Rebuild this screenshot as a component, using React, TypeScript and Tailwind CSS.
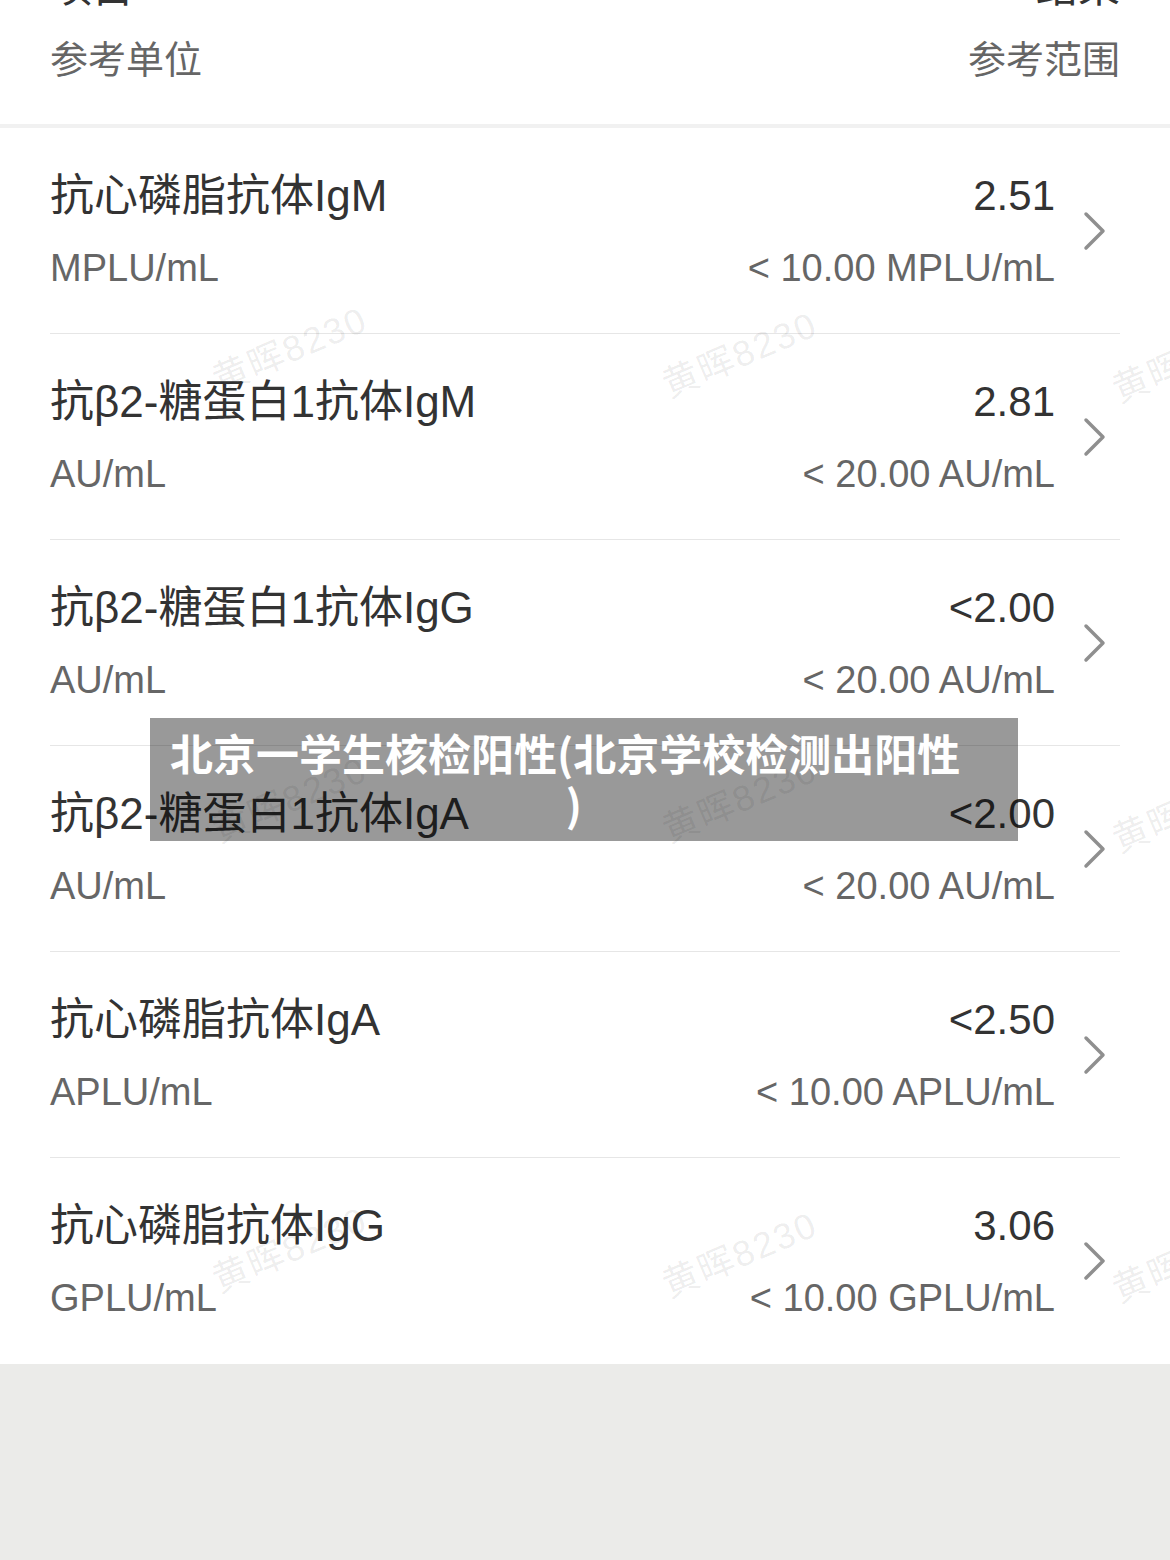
import React from 'react';

type Item = {
    name: string;
    unit: string;
    value: string;
    range: string;
};

const ITEMS: Item[] = [
    { name: '抗心磷脂抗体IgM', unit: 'MPLU/mL', value: '2.51', range: '< 10.00 MPLU/mL' },
    { name: '抗β2-糖蛋白1抗体IgM', unit: 'AU/mL', value: '2.81', range: '< 20.00 AU/mL' },
    { name: '抗β2-糖蛋白1抗体IgG', unit: 'AU/mL', value: '<2.00', range: '< 20.00 AU/mL' },
    { name: '抗β2-糖蛋白1抗体IgA', unit: 'AU/mL', value: '<2.00', range: '< 20.00 AU/mL' },
    { name: '抗心磷脂抗体IgA', unit: 'APLU/mL', value: '<2.50', range: '< 10.00 APLU/mL' },
    { name: '抗心磷脂抗体IgG', unit: 'GPLU/mL', value: '3.06', range: '< 10.00 GPLU/mL' },
];

// watermark centres
const MARKS = [
    [290, 350], [740, 355], [1190, 360],
    [290, 800], [740, 800], [1190, 810],
    [290, 1250], [740, 1255], [1190, 1260],
];

const FONT = "font-['Liberation_Sans','Noto_Sans_CJK_SC',sans-serif]";

const Chevron: React.FC = () => (
    <svg width="24" height="40" viewBox="0 0 24 40" fill="none">
        <path d="M3 3 L20 20 L3 37" stroke="#8f8f8f" strokeWidth="3.5" strokeLinecap="round" strokeLinejoin="round" />
    </svg>
);

const App: React.FC = () => {
    return (
        <div className={`relative h-[1560px] overflow-hidden bg-[#ebebe9] ${FONT}`}>
            <div className="bg-white -mt-[79px]">
                {/* Header */}
                <div className="mx-[50px] h-[203px] flex flex-col justify-center gap-[24px]">
                    <div className="flex justify-between text-[42px] leading-[50px] text-[#333]">
                        <span>项目</span>
                        <span>结果</span>
                    </div>
                    <div className="flex justify-between text-[38px] leading-[46px] text-[#666]">
                        <span>参考单位</span>
                        <span>参考范围</span>
                    </div>
                </div>
                <div className="h-[4px] bg-[#f1f1f1]"></div>

                {/* Rows */}
                {ITEMS.map((item, i) => (
                    <div
                        key={i}
                        className={`mx-[50px] h-[206px] flex items-center ${i < ITEMS.length - 1 ? 'border-b border-[#e6e6e6]' : ''}`}
                    >
                        <div className="flex-1 flex flex-col gap-[24px]">
                            <div className="flex justify-between text-[44px] leading-[50px] text-[#333]">
                                <span>{item.name}</span>
                                <span className="text-[42px]">{item.value}</span>
                            </div>
                            <div className="flex justify-between text-[38px] leading-[46px] text-[#666]">
                                <span>{item.unit}</span>
                                <span>{item.range}</span>
                            </div>
                        </div>
                        <div className="w-[65px] pl-[28px] flex items-center">
                            <Chevron />
                        </div>
                    </div>
                ))}
            </div>

            {/* Watermarks */}
            {MARKS.map(([x, y], i) => (
                <div
                    key={i}
                    className="absolute -translate-x-1/2 -translate-y-1/2 -rotate-[23deg] whitespace-nowrap text-[36px] tracking-[2px] text-[#000]/[0.08] pointer-events-none"
                    style={{ left: x, top: y }}
                >
                    黄晖8230
                </div>
            ))}

            {/* Title overlay */}
            <div className="absolute left-[150px] top-[718px] w-[868px] h-[123px] bg-[#000]/[0.4] pt-[9px] pl-[20px] pr-[40px] text-white font-bold text-[43px] leading-[51px] font-['Noto_Sans_CJK_SC',sans-serif]">
                <div className="whitespace-nowrap">北京一学生核检阳性(北京学校检测出阳性</div>
                <div className="text-center">)</div>
            </div>
        </div>
    );
};

export default App;
